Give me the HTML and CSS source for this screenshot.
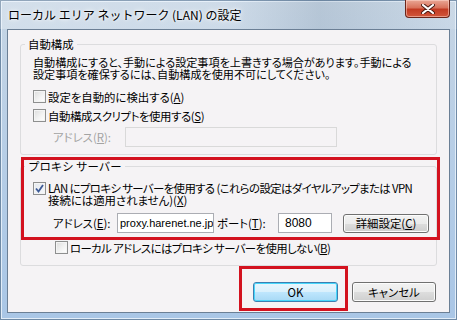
FILE: index.html
```html
<!DOCTYPE html>
<html lang="ja">
<head>
  <meta charset="UTF-8">
  <title>ローカル エリア ネットワーク (LAN) の設定</title>
  <link rel="stylesheet" href="styles.css">
</head>
<body>
  <div class="window">
    <div class="titlebar">
      <span class="title">ローカル エリア ネットワーク (LAN) の設定</span>
      <span class="close">
        <svg width="14" height="10" viewBox="0 0 14 10">
          <path d="M2 1 L12 9 M12 1 L2 9" stroke="#4a1a12" stroke-width="4" stroke-linecap="round"/>
          <path d="M2 1 L12 9 M12 1 L2 9" stroke="#fff" stroke-width="2.2" stroke-linecap="round"/>
        </svg>
      </span>
    </div>

    <div class="client">
      <fieldset class="group group-auto">
        <legend>自動構成</legend>
        <p class="desc">自動構成にすると、手動による設定事項を上書きする場合があります。手動による<br>設定事項を確保するには、自動構成を使用不可にしてください。</p>
        <div class="check"><span class="box"></span><span>設定を自動的に検出する(<u>A</u>)</span></div>
        <div class="check"><span class="box"></span><span class="tight">自動構成スクリプトを使用する(<u>S</u>)</span></div>
        <div class="field-row disabled">
          <span class="field-label">アドレス(<u>R</u>):</span>
          <span class="input input-script"></span>
        </div>
      </fieldset>

      <fieldset class="group group-proxy">
        <legend>プロキシ サーバー</legend>
        <div class="check check-multi">
          <span class="box checked">
            <svg width="9" height="9" viewBox="0 0 9 9"><path d="M1 4.5 L3.5 7.5 L8 1" fill="none" stroke="#3d5a96" stroke-width="1.8"/></svg>
          </span>
          <span><span class="tighter">LAN にプロキシ サーバーを使用する (これらの設定はダイヤルアップまたは VPN</span><br>接続には適用されません)(<u>X</u>)</span>
        </div>
        <div class="field-row">
          <span class="field-label">アドレス(<u>E</u>):</span>
          <span class="input input-address">proxy.harenet.ne.jp</span>
          <span class="port-label">ポート(<u>T</u>):</span>
          <span class="input input-port">8080</span>
          <span class="btn btn-advanced">詳細設定(<u>C</u>)</span>
        </div>
        <div class="check check-local"><span class="box"></span><span class="tighter">ローカル アドレスにはプロキシ サーバーを使用しない(<u>B</u>)</span></div>
      </fieldset>

      <div class="actions">
        <span class="btn btn-default">OK</span>
        <span class="btn">キャンセル</span>
      </div>

      <div class="mark mark-proxy"></div>
      <div class="mark mark-ok"></div>
    </div>
  </div>
</body>
</html>
```

FILE: styles.css
```css
body {
  margin: 0;
  font-family: "Noto Sans CJK JP", "Noto Sans", sans-serif;
  font-size: 11.4px;
  color: #000;
}
.window {
  width: 457px;
  height: 320px;
  display: flex;
  flex-direction: column;
  background: linear-gradient(to bottom, #c6d5e4 0%, #b9cfe6 40%, #a9c6e6 100%);
  box-shadow: inset 0 0 0 1px #6f8aa6, inset 0 0 0 2px #e2edf8;
}
.titlebar {
  flex: none;
  height: 29px;
  display: flex;
  justify-content: space-between;
  align-items: flex-start;
  background: linear-gradient(to right, rgba(255,255,255,0.25) 0%, rgba(255,255,255,0.15) 50%, rgba(90,110,130,0.14) 70%, rgba(255,255,255,0.1) 100%);
}
.title {
  margin: 8px 0 0 8px;
  font-size: 12px;
  line-height: 14px;
  text-shadow: 0 0 6px #fff, 0 0 3px #fff;
}
.close {
  width: 43px;
  height: 17px;
  margin-right: 7px;
  display: flex;
  align-items: center;
  justify-content: center;
  border: 1px solid #6b2418;
  border-top: 0;
  border-radius: 0 0 4px 4px;
  background: linear-gradient(to bottom, #e9a795 0%, #d9735c 45%, #c23a22 55%, #d2563a 100%);
  box-shadow: inset 0 0 0 1px rgba(255,220,210,0.5);
}
.client {
  position: relative;
  flex: 1;
  min-height: 0;
  margin: 0 7px 7px 7px;
  border: 1px solid #6b7f95;
  background: #f5f3f5;
  padding: 0 12px 0 12px;
  display: flex;
  flex-direction: column;
}
.group {
  margin: 0;
  padding: 0 0 0 12px;
  border: 1px solid #dcdcde;
  border-radius: 3px;
  min-width: 0;
}
.group legend {
  margin-left: -8px;
  padding: 0 3px;
  line-height: 12px;
}
.group-auto {
  margin-top: 8px;
  padding-top: 6px;
  padding-bottom: 7px;
}
.group-proxy {
  margin-top: 5px;
  padding-top: 10px;
  padding-bottom: 11px;
}
.desc {
  margin: 0 0 10px 0;
  font-size: 11.1px;
  line-height: 12px;
  font-feature-settings: "palt";
}
.check {
  display: flex;
  align-items: center;
  gap: 2px;
  height: 13px;
  line-height: 12px;
  font-feature-settings: "palt";
  margin-bottom: 6px;
  white-space: nowrap;
}
.check-multi {
  align-items: flex-start;
  height: auto;
  line-height: 12px;
  margin-bottom: 7px;
}
.tight {
  letter-spacing: -0.4px;
}
.tighter {
  letter-spacing: -0.6px;
}
.check-local {
  margin: 8px 0 0 22px;
}
.box {
  flex: none;
  width: 11px;
  height: 11px;
  border: 1px solid #8e8f8f;
  background: linear-gradient(135deg, #dcdcdc 0%, #f4f4f4 60%, #fff 100%);
  box-shadow: inset 0 0 0 1px #f4f4f4;
  display: flex;
  align-items: center;
  justify-content: center;
}
.box.checked {
  background: linear-gradient(135deg, #e4e8ee 0%, #f6f8fb 100%);
}
.field-row {
  display: flex;
  align-items: center;
  height: 20px;
  font-feature-settings: "palt";
  white-space: nowrap;
}
.field-label {
  margin-left: 20px;
  width: 64px;
  flex: none;
}
.disabled {
  margin-top: -1px;
  color: #a3a3a3;
}
.input {
  flex: none;
  box-sizing: border-box;
  height: 20px;
  border: 1px solid #abadb3;
  background: #fff;
  padding: 0 2px;
  font-family: "Liberation Sans", sans-serif;
  font-size: 11px;
  line-height: 18px;
  overflow: hidden;
  white-space: nowrap;
}
.input-script {
  width: 212px;
  margin-left: 8px;
  border-color: #d9d9d9;
  background: #f5f3f5;
}
.input-address {
  width: 97px;
}
.port-label {
  flex: none;
  margin-left: 3px;
  width: 61px;
}
.input-port {
  width: 54px;
  padding-left: 6px;
  font-size: 12px;
}
.btn {
  flex: none;
  box-sizing: border-box;
  display: flex;
  align-items: center;
  justify-content: center;
  width: 84px;
  height: 20px;
  border: 1px solid #707070;
  border-radius: 3px;
  background: linear-gradient(to bottom, #f2f2f2 0%, #ebebeb 50%, #dddddd 51%, #cfcfcf 100%);
  box-shadow: inset 0 0 0 1px #fcfcfc;
  font-feature-settings: "palt";
}
.btn-advanced {
  width: 86px;
  height: 19px;
  margin-left: 11px;
}
.actions {
  display: flex;
  justify-content: flex-end;
  gap: 14px;
  margin: 16px 1px 0 0;
}
.btn-default {
  width: 85px;
  border-color: #3c7fb1;
  background: linear-gradient(to bottom, #eaf6fd 0%, #d9f0fc 50%, #bee6fd 51%, #a7d9f5 100%);
  box-shadow: inset 0 0 0 1px #48d7fb;
}
.mark {
  position: absolute;
  border: 3px solid #d3121f;
}
.mark-proxy {
  left: 13px;
  top: 127px;
  width: 413px;
  height: 77px;
}
.mark-ok {
  left: 231px;
  top: 236px;
  width: 103px;
  height: 39px;
}
```
